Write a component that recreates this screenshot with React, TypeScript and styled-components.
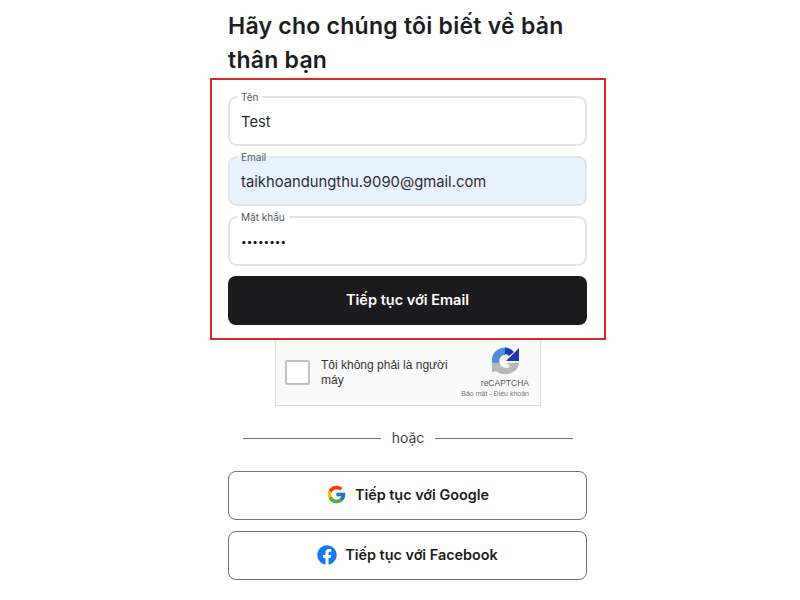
import styled, { createGlobalStyle } from 'styled-components';
import { FcGoogle } from 'react-icons/fc';
import { FaFacebook } from 'react-icons/fa';

const GlobalStyle = createGlobalStyle`
  html, body {
    margin: 0;
    padding: 0;
    background: #fff;
  }

  body {
    font-family: 'Inter', 'Noto Sans', sans-serif;
    color: #1c1c1c;
  }
`;

function RecaptchaLogo() {
  return (
    <svg width='28' height='28' viewBox='0 0 30 30' fill='none'>
      <path d='M5 19V14A10 10 0 0 1 16 4.5' stroke='#4a8fe0' strokeWidth='8' />
      <path d='M15 4a10 10 0 0 1 7 3.5' stroke='#1c3aa9' strokeWidth='7' />
      <path d='M30 1v14H16z' fill='#1c3aa9' />
      <path d='M1 17h8a7 7 0 0 0 11.5 3.5L17 17h13a15 12 0 0 1-25 9l-4 1z' fill='#b8b8b8' />
    </svg>
  );
}

export default function App() {
  return (
    <>
      <GlobalStyle />
      <Page>
        <Column>
          <Title>Hãy cho chúng tôi biết về bản thân bạn</Title>
          <HighlightBox>
            <Field>
              <Legend>Tên</Legend>
              <Value>Test</Value>
            </Field>
            <Field $filled>
              <Legend>Email</Legend>
              <Value>taikhoandungthu.9090@gmail.com</Value>
            </Field>
            <Field>
              <Legend>Mật khẩu</Legend>
              <Dots>••••••••</Dots>
            </Field>
            <PrimaryButton type='button'>Tiếp tục với Email</PrimaryButton>
          </HighlightBox>
          <Captcha>
            <CheckBox />
            <CaptchaText>Tôi không phải là người máy</CaptchaText>
            <CaptchaBrand>
              <LogoSlot>
                <RecaptchaLogo />
              </LogoSlot>
              <BrandName>reCAPTCHA</BrandName>
              <BrandLinks>Bảo mật - Điều khoản</BrandLinks>
            </CaptchaBrand>
          </Captcha>
          <Divider>
            <span>hoặc</span>
          </Divider>
          <SocialList>
            <SocialButton type='button'>
              <FcGoogle size={21} />
              Tiếp tục với Google
            </SocialButton>
            <SocialButton type='button'>
              <FaFacebook size={20} color='#1877f2' />
              Tiếp tục với Facebook
            </SocialButton>
          </SocialList>
        </Column>
      </Page>
    </>
  );
}

const Page = styled.div`
  width: 800px;
  height: 600px;
  overflow: hidden;
  display: flex;
  justify-content: center;
  background: #fff;
`;

const Column = styled.div`
  width: 396px;
  margin-left: 16px;
  display: flex;
  flex-direction: column;
`;

const Title = styled.h1`
  margin: 9px 18px 0;
  font-size: 23px;
  line-height: 34px;
  font-weight: 600;
  letter-spacing: 0.25px;
  color: #1d1d1f;
`;

const HighlightBox = styled.div`
  box-sizing: border-box;
  height: 262px;
  margin-top: 1px;
  padding: 10px 17px 0 16px;
  border: 2px solid #d8282c;
  display: flex;
  flex-direction: column;
`;

const Field = styled.fieldset<{ $filled?: boolean }>`
  box-sizing: border-box;
  height: 56px;
  margin: 0 0 4px;
  padding: 0 11px;
  border: 2px solid #e2e4e8;
  border-radius: 9px;
  background: ${(p) => (p.$filled ? '#e8f2fe' : '#fff')};
  min-width: 0;
`;

const Legend = styled.legend`
  padding: 0 4px;
  margin-left: -4px;
  font-size: 10px;
  line-height: 14px;
  color: #55585e;
`;

const Value = styled.div`
  font-size: 14.8px;
  line-height: 20px;
  margin-top: 8px;
  color: #2c2d30;
`;

const Dots = styled(Value)`
  font-size: 10px;
  margin-top: 7px;
  color: #111;
`;

const PrimaryButton = styled.button`
  height: 49px;
  margin-top: 6px;
  padding: 0 0 2px;
  border: none;
  border-radius: 8px;
  background: #1b1b1d;
  color: #fff;
  font-family: inherit;
  font-size: 14.5px;
  font-weight: 600;
`;

const Captcha = styled.div`
  box-sizing: border-box;
  align-self: center;
  width: 266px;
  height: 66px;
  padding: 0 11px 0 9px;
  display: flex;
  align-items: center;
  background: #fafafa;
  border: 1px solid #e0e0e0;
  border-top: none;
`;

const CheckBox = styled.div`
  box-sizing: border-box;
  flex: none;
  width: 25px;
  height: 25px;
  background: #fff;
  border: 2px solid #c1c1c1;
  border-radius: 2px;
`;

const CaptchaText = styled.div`
  width: 135px;
  margin-left: 11px;
  font-family: 'Liberation Sans', sans-serif;
  font-size: 12px;
  line-height: 15px;
  color: #333;
`;

const CaptchaBrand = styled.div`
  margin-left: auto;
  display: flex;
  flex-direction: column;
  align-items: flex-end;
  font-family: 'Liberation Sans', sans-serif;
  color: #555;
`;

const LogoSlot = styled.div`
  height: 28px;
  margin-right: 10px;
`;

const BrandName = styled.div`
  margin-top: 3px;
  font-size: 8.5px;
  line-height: 11px;
`;

const BrandLinks = styled.div`
  font-size: 7px;
  line-height: 10px;
  white-space: nowrap;
  color: #777;
`;

const Divider = styled.div`
  margin: 24px 33px 0;
  display: flex;
  align-items: center;
  gap: 11px;
  font-size: 14px;
  line-height: 16px;
  color: #444;

  &::before,
  &::after {
    content: '';
    flex: 1;
    height: 1px;
    background: #6e6e6e;
  }
`;

const SocialList = styled.div`
  margin: 25px 19px 0 18px;
  display: flex;
  flex-direction: column;
  gap: 11px;
`;

const SocialButton = styled.button`
  height: 49px;
  padding: 0 0 2px;
  display: flex;
  align-items: center;
  justify-content: center;
  gap: 8px;
  background: #fff;
  border: 1.5px solid #6f6f72;
  border-radius: 8px;
  color: #1c1c1c;
  font-family: inherit;
  font-size: 14.4px;
  font-weight: 600;
`;
